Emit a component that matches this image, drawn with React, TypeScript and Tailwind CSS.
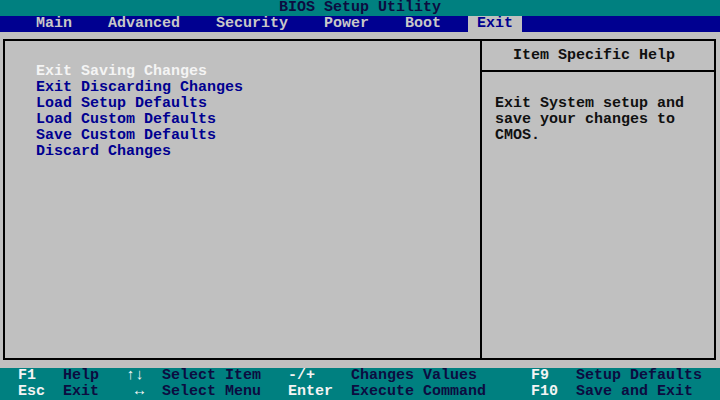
const tabs = ["Main", "Advanced", "Security", "Power", "Boot", "Exit"]

const exitItems = [
    "Exit Saving Changes",
    "Exit Discarding Changes",
    "Load Setup Defaults",
    "Load Custom Defaults",
    "Save Custom Defaults",
    "Discard Changes",
]

const keyRows = [
    ["F1", "Help", "↑↓", "Select Item", "-/+", "Changes Values", "F9", "Setup Defaults"],
    ["Esc", "Exit", " ↔", "Select Menu", "Enter", "Execute Command", "F10", "Save and Exit"],
]

export default function App() {
    return (
        <div className="w-[720px] h-[400px] overflow-hidden bg-[#c0c0c0] font-['Liberation_Mono',monospace] font-bold text-[15px] leading-4 flex flex-col">
            {/* title */}
            <div className="h-4 bg-[#008080] text-[#0c0c40] text-center whitespace-pre">BIOS Setup Utility</div>

            {/* menu bar */}
            <div className="h-4 bg-[#000090] text-[#c8c8c8] flex pl-[27px] gap-[18px]">
                {tabs.map((t) => (
                    <div key={t} className={t === "Exit" ? "px-[9px] bg-[#c0c0c0] text-[#000090]" : "px-[9px]"}>
                        {t}
                    </div>
                ))}
            </div>

            {/* main frame */}
            <div className="h-[336px] pt-[7px] pl-[3px] pr-[4px] pb-[8px]">
                <div className="h-full border-2 border-black flex">
                    <div className="w-[477px] border-r-2 border-black pt-[23px] pl-[31px] flex flex-col">
                        {exitItems.map((item, i) => (
                            <div key={item} className={i === 0 ? "h-4 text-[#f4f4f4]" : "h-4 text-[#000090]"}>
                                {item}
                            </div>
                        ))}
                    </div>
                    <div className="flex-1 flex flex-col text-[#101010]">
                        <div className="h-[31px] border-b-2 border-black pt-[7px] pl-[31px]">Item Specific Help</div>
                        <div className="pt-[24px] pl-[13px] flex flex-col">
                            <div className="h-4">Exit System setup and</div>
                            <div className="h-4">save your changes to</div>
                            <div className="h-4">CMOS.</div>
                        </div>
                    </div>
                </div>
            </div>

            {/* key legend */}
            <div className="h-8 bg-[#008080] pl-[18px] grid grid-cols-[45px_63px_36px_126px_63px_180px_45px_1fr] grid-rows-2 whitespace-pre">
                {keyRows.map((row) =>
                    row.map((cell, j) => (
                        <div key={row[0] + j} className={j % 2 === 0 ? "h-4 text-[#f4f4f4]" : "h-4 text-[#0c0c40]"}>
                            {cell}
                        </div>
                    ))
                )}
            </div>
        </div>
    )
}
